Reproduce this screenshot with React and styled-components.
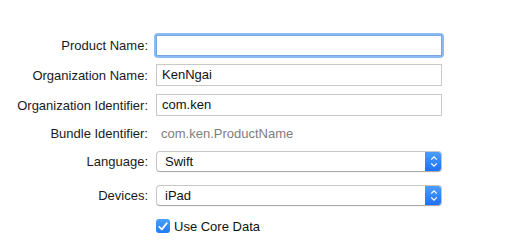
import styled, { createGlobalStyle } from "styled-components";

const Global = createGlobalStyle`
    html, body {
        margin: 0;
        padding: 0;
        background: #ffffff;
    }
    body {
        font-family: "Liberation Sans", Arial, sans-serif;
        font-size: 13px;
        color: #000;
    }
`

export default function App(){
    return(
        <>
            <Global />
            <Form>
                <Row h={30}>
                    <Label>Product Name:</Label>
                    <FocusRing>
                        <Field focused />
                    </FocusRing>
                </Row>
                <Row h={30}>
                    <Label>Organization Name:</Label>
                    <Field>KenNgai</Field>
                </Row>
                <Row h={30}>
                    <Label>Organization Identifier:</Label>
                    <Field>com.ken</Field>
                </Row>
                <Row h={26}>
                    <Label>Bundle Identifier:</Label>
                    <Value>com.ken.ProductName</Value>
                </Row>
                <Row h={31}>
                    <Label>Language:</Label>
                    <Popup>
                        <span>Swift</span>
                        <Stepper />
                    </Popup>
                </Row>
                <Row h={37}>
                    <Label>Devices:</Label>
                    <Popup>
                        <span>iPad</span>
                        <Stepper />
                    </Popup>
                </Row>
                <Row h={24}>
                    <span />
                    <Check>
                        <Box>
                            <svg width="10" height="9" viewBox="0 0 10 9">
                                <path d="M1.3 4.8 L3.9 7.4 L8.7 1.2" fill="none" stroke="#fff" strokeWidth="1.8" strokeLinecap="round" strokeLinejoin="round" />
                            </svg>
                        </Box>
                        Use Core Data
                    </Check>
                </Row>
            </Form>
        </>
    )
}

function Stepper(){
    return(
        <StepButton>
            <svg width="8" height="13" viewBox="0 0 8 13">
                <path d="M1.2 4.6 L4 1.8 L6.8 4.6" fill="none" stroke="#fff" strokeWidth="1.3" />
                <path d="M1.2 8.4 L4 11.2 L6.8 8.4" fill="none" stroke="#fff" strokeWidth="1.3" />
            </svg>
        </StepButton>
    )
}

const Form = styled.div`
    padding-top: 30px;
    display: flex;
    flex-direction: column;
`
const Row = styled.div`
    height: ${p => p.h}px;
    display: grid;
    grid-template-columns: 148px 286px;
    column-gap: 8px;
    align-items: center;
`
const Label = styled.div`
    text-align: right;
    white-space: nowrap;
    color: #1a1a1a;
`
const FocusRing = styled.div`
    margin-left: -2px;
    padding: 2px;
    width: 286px;
    border-radius: 4px;
    background: #8bbaf5;
    box-sizing: border-box;
    width: 290px;
`
const Field = styled.div`
    height: 22px;
    box-sizing: border-box;
    border: 1px solid ${p => p.focused ? "#7aa6e0" : "#c9c9c9"};
    background: #fff;
    padding: 0 5px;
    display: flex;
    align-items: center;
    line-height: 20px;
    color: #111;
    ${p => p.focused && "height: 21px;"}
`
const Value = styled.div`
    padding-left: 5px;
    color: #7d7d7d;
`
const Popup = styled.div`
    height: 21px;
    box-sizing: border-box;
    border: 1px solid #c6c6c6;
    border-bottom-color: #aaaaaa;
    border-radius: 4px;
    background: #fff;
    display: flex;
    align-items: center;
    justify-content: space-between;
    padding-left: 8px;
    overflow: hidden;
    box-shadow: 0 0.5px 0.5px rgba(0,0,0,0.08);
    span {
        color: #111;
    }
`
const StepButton = styled.div`
    width: 17px;
    height: 21px;
    margin-right: -1px;
    margin-top: -1px;
    margin-bottom: -1px;
    background: linear-gradient(#4ea0fa, #1b6ff5);
    border-radius: 0 4px 4px 0;
    display: flex;
    align-items: center;
    justify-content: center;
`
const Check = styled.label`
    display: flex;
    align-items: center;
    gap: 4px;
    color: #111;
`
const Box = styled.span`
    width: 14px;
    height: 14px;
    border-radius: 3px;
    background: linear-gradient(#4aa0fb, #1f7af5);
    display: flex;
    align-items: center;
    justify-content: center;
`
